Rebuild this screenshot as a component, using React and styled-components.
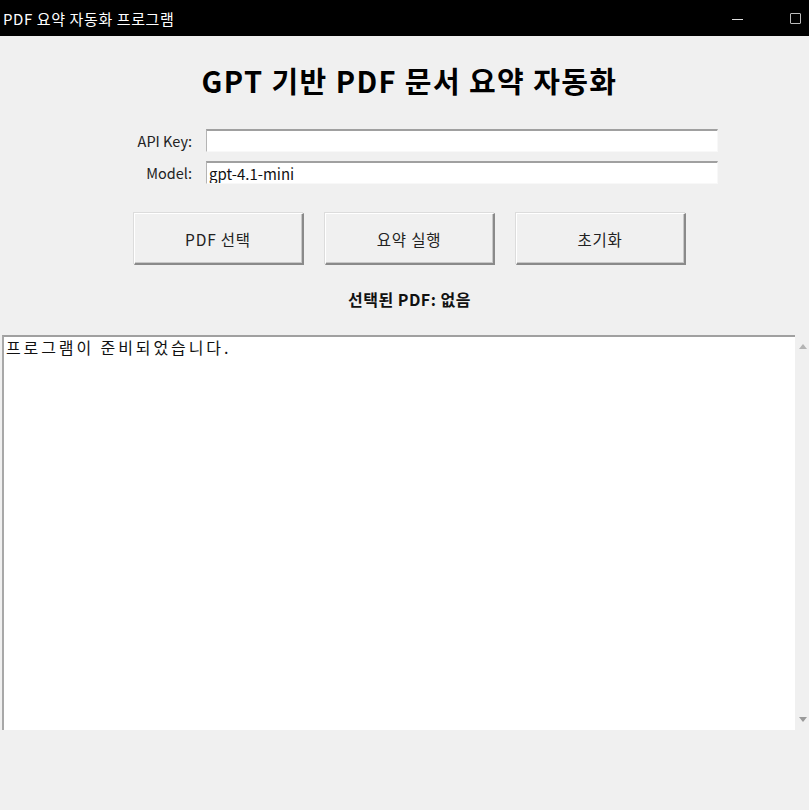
import styled, { createGlobalStyle } from "styled-components";

const Global = createGlobalStyle`
  html, body {
    margin: 0;
    padding: 0;
    background: #f0f0f0;
  }
  * { box-sizing: border-box; }
`;

const Window = styled.div`
  width: 809px;
  height: 810px;
  display: flex;
  flex-direction: column;
  background: #f0f0f0;
  font-family: "Noto Sans CJK KR", "Noto Sans", sans-serif;
  color: #000;
  overflow: hidden;
`;

const TitleBar = styled.div`
  height: 36px;
  flex: none;
  background: #000;
  display: flex;
  align-items: center;
  padding-left: 3px;
  color: #fff;
  font-size: 15px;
  letter-spacing: 0.6px;
`;

const TitleText = styled.span`
  flex: 1;
  line-height: 1;
`;

const Minimize = styled.div`
  width: 11px;
  height: 1px;
  background: #ddd;
  margin-right: 47px;
  margin-top: 2px;
`;

const Maximize = styled.div`
  width: 11px;
  height: 11px;
  border: 1px solid #bbb;
  border-radius: 1px;
  margin-right: 8px;
`;

const Content = styled.div`
  flex: 1;
  display: flex;
  flex-direction: column;
`;

const Heading = styled.h1`
  margin: 25px 0 0 10px;
  text-align: center;
  font-size: 29px;
  font-weight: 700;
  letter-spacing: 1.4px;
  line-height: 38px;
`;

const Form = styled.div`
  margin-top: 30px;
  display: grid;
  grid-template-columns: 192px 512px;
  column-gap: 14px;
  row-gap: 9px;
  align-items: center;
`;

const Label = styled.label`
  justify-self: end;
  font-size: 14.5px;
  color: #222;
`;

const Input = styled.input`
  height: 23px;
  width: 512px;
  margin: 0;
  padding: 0 2px;
  background: #fff;
  border: none;
  border-top: 2px solid #a0a0a0;
  border-left: 1px solid #b4b4b4;
  border-right: 1px solid #f8f8f8;
  border-bottom: 1px solid #f8f8f8;
  font-family: "Noto Sans CJK KR", "Noto Sans", sans-serif;
  font-size: 15px;
  color: #111;
  outline: none;
`;

const ButtonRow = styled.div`
  margin-top: 29px;
  padding-left: 10px;
  display: flex;
  justify-content: center;
  gap: 21px;
`;

const Button = styled.button`
  width: 170px;
  height: 52px;
  margin: 0;
  background: #f0f0f0;
  border: none;
  border-top: 1px solid #fff;
  border-left: 1px solid #fff;
  border-right: 2px solid #8a8a8a;
  border-bottom: 2px solid #8a8a8a;
  box-shadow: inset -1px -1px 0 #c8c8c8, -1px -1px 0 #dcdcdc;
  font-family: "Noto Sans CJK KR", "Noto Sans", sans-serif;
  font-size: 15.5px;
  letter-spacing: 0.8px;
  color: #222;
`;

const Status = styled.div`
  margin: 22px 0 0 10px;
  text-align: center;
  font-size: 16px;
  letter-spacing: 0.5px;
  font-weight: 700;
  color: #111;
`;

const OutputRow = styled.div`
  margin-top: 24px;
  height: 395px;
  display: flex;
  padding-left: 2px;
`;

const TextArea = styled.div`
  width: 793px;
  height: 395px;
  background: #fff;
  border-top: 2px solid #a0a0a0;
  border-left: 2px solid #a8a8a8;
  padding: 0 2px;
  font-family: "Noto Sans CJK KR", "DejaVu Sans Mono", monospace;
  font-size: 16px;
  letter-spacing: 2.9px;
  line-height: 20px;
  color: #111;
`;

const Scrollbar = styled.div`
  flex: 1;
  display: flex;
  flex-direction: column;
  justify-content: space-between;
  align-items: center;
  padding: 9px 0 8px 2px;
  background: #f0f0f0;
`;

const Arrow = styled.div`
  width: 0;
  height: 0;
  border-left: 4px solid transparent;
  border-right: 4px solid transparent;
  ${p => p.$down
    ? "border-top: 5px solid #9a9a9a;"
    : "border-bottom: 5px solid #b4b4b4;"}
`;

export default function App() {
  return (
    <Window>
      <Global />
      <TitleBar>
        <TitleText>PDF 요약 자동화 프로그램</TitleText>
        <Minimize />
        <Maximize />
      </TitleBar>
      <Content>
        <Heading>GPT 기반 PDF 문서 요약 자동화</Heading>
        <Form>
          <Label>API Key:</Label>
          <Input type="password" defaultValue="" />
          <Label>Model:</Label>
          <Input defaultValue="gpt-4.1-mini" />
        </Form>
        <ButtonRow>
          <Button>PDF 선택</Button>
          <Button>요약 실행</Button>
          <Button>초기화</Button>
        </ButtonRow>
        <Status>선택된 PDF: 없음</Status>
        <OutputRow>
          <TextArea>프로그램이 준비되었습니다.</TextArea>
          <Scrollbar>
            <Arrow />
            <Arrow $down />
          </Scrollbar>
        </OutputRow>
      </Content>
    </Window>
  );
}
